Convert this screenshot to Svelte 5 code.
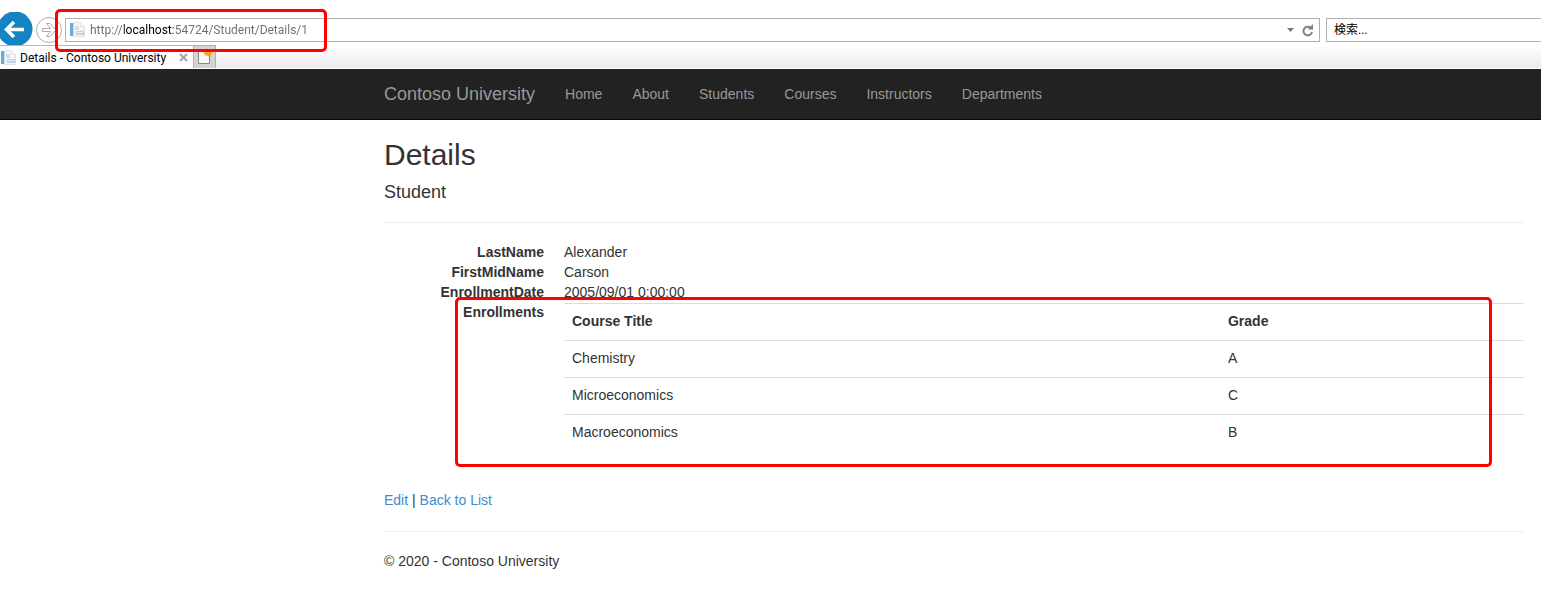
<script>
  const nav = ['Home', 'About', 'Students', 'Courses', 'Instructors', 'Departments'];
  const fields = [
    ['LastName', 'Alexander'],
    ['FirstMidName', 'Carson'],
    ['EnrollmentDate', '2005/09/01 0:00:00']
  ];
  const enrollments = [
    ['Chemistry', 'A'],
    ['Microeconomics', 'C'],
    ['Macroeconomics', 'B']
  ];
</script>

{#snippet pageIcon()}
  <svg class="page-icon" viewBox="0 0 16 16" aria-hidden="true">
    <path d="M4.5.5h7l4 4v10h-11z" fill="#f3f5f7" stroke="#e0e3e6" />
    <path d="M11.5.5v4h4" fill="#fff" stroke="#dce0e4" />
    <path d="M1 1h3v13H1z" fill="#6cabd9" />
    <path d="M4 1h1v13H4z" fill="#c4dcec" />
    <path d="M6 4h4v4H6z" fill="#d4dfe9" />
    <path d="M7 9h8v4H7z" fill="#c3d1df" />
    <path d="M8 10h6v1H8z" fill="#eef2f6" />
  </svg>
{/snippet}

<header class="chrome">
  <div class="toolbar">
    <button class="icon-button back" aria-label="Back">
      <svg width="33" height="34" viewBox="0 0 33 34">
        <circle cx="15" cy="17" r="17.5" fill="#1585c1" />
        <path d="M14 10 6.500 17.500 14 25M7 17.500h17" fill="none" stroke="#fff" stroke-width="3.500" />
      </svg>
    </button>
    <button class="icon-button forward" aria-label="Forward">
      <svg width="26" height="26" viewBox="0 0 26 26">
        <circle cx="13" cy="13" r="12.5" fill="#fff" stroke="#b0b0b0" />
        <path d="M6.500 11.500h8l-4-5h3.500l6 6.500-6 6.500h-3.500l4-5h-8z" fill="#fff" stroke="#ababab" />
      </svg>
    </button>
    <div class="address">
      {@render pageIcon()}
      <input class="url" aria-label="Address" value="http://localhost:54724/Student/Details/1" spellcheck="false" />
      <button class="icon-button" aria-label="Show address history">
        <svg width="7" height="4" viewBox="0 0 7 4"><path d="M0 0h7L3.500 4z" fill="#777" /></svg>
      </button>
      <button class="icon-button" aria-label="Refresh">
        <svg width="12" height="13" viewBox="0 0 12 13">
          <path d="M8.500 3.700A4.300 4.300 0 1 0 10 8" fill="none" stroke="#808080" stroke-width="2" />
          <path d="M5.500 5.500H11V0z" fill="#808080" />
        </svg>
      </button>
      <span class="marker address-marker"></span>
    </div>
    <input class="search" aria-label="検索" placeholder="検索..." />
  </div>
  <div class="tabs">
    <div class="tab">
      {@render pageIcon()}
      <span>Details - Contoso University</span>
      <button class="icon-button close" aria-label="Close tab">
        <svg width="9" height="9" viewBox="0 0 9 9"><path d="m1 1 7 7m0-7L1 8" stroke="#a3a3a3" stroke-width="2" /></svg>
      </button>
    </div>
    <button class="new-tab" aria-label="New tab">
      <svg width="21" height="22" viewBox="0 0 21 22">
        <path d="M4.500 4.500h11v13h-11z" fill="#f7f7f7" stroke="#888" />
        <path d="m14 3 1 2 3-1-1 2 2 1-2 1 0 2-2-1-1 2-1-2-2 1 0-2-2-1 2-1-1-2 3 1z" fill="#f9a11b" />
      </svg>
    </button>
  </div>
</header>

<nav class="navbar">
  <div class="container">
    <a class="brand" href="#home">Contoso University</a>
    {#each nav as item}
      <a href="#{item.toLowerCase()}">{item}</a>
    {/each}
  </div>
</nav>

<main class="container">
  <h2>Details</h2>
  <h4>Student</h4>
  <hr />
  <div class="details">
    <dl>
      {#each fields as [name, value]}
        <dt>{name}</dt>
        <dd>{value}</dd>
      {/each}
      <dt>Enrollments</dt>
      <dd>
        <table>
          <thead>
            <tr><th class="course">Course Title</th><th>Grade</th></tr>
          </thead>
          <tbody>
            {#each enrollments as [course, grade]}
              <tr><td>{course}</td><td>{grade}</td></tr>
            {/each}
          </tbody>
        </table>
      </dd>
    </dl>
    <span class="marker enrollment-marker"></span>
  </div>
  <p><a href="#edit">Edit</a> | <a href="#list">Back to List</a></p>
  <hr />
  <footer><p>© 2020 - Contoso University</p></footer>
</main>

<style>
  :global(body) {
    margin: 0;
    overflow-x: hidden;
    background: #fff;
    color: #333;
    font: 14px/20px 'Liberation Sans', Arial, sans-serif;
  }
  .chrome {
    font: 12px/16px Roboto, 'Noto Sans CJK JP', sans-serif;
    color: #000;
  }
  .toolbar {
    display: flex;
    height: 45px;
    box-sizing: border-box;
    padding-top: 12px;
  }
  .icon-button {
    display: flex;
    flex: none;
    align-items: center;
    padding: 0;
    border: 0;
    background: none;
  }
  .icon-button svg,
  .page-icon {
    display: block;
    flex: none;
  }
  .page-icon {
    width: 16px;
    height: 16px;
  }
  .back {
    align-items: flex-start;
  }
  .forward {
    align-items: flex-start;
    margin: 5px 3px 0;
  }
  .address {
    position: relative;
    display: flex;
    flex: 1;
    align-items: center;
    gap: 8px;
    box-sizing: border-box;
    height: 24px;
    margin-top: 6px;
    padding: 0 5px 0 3px;
    border: 1px solid #b0b0b0;
    background: #fff;
  }
  input {
    box-sizing: border-box;
    min-width: 0;
    border: 0;
    outline: 0;
    font: inherit;
  }
  .url {
    flex: 1;
    height: 20px;
    padding: 0;
    margin-left: -3px;
    background: linear-gradient(90deg, #6d6d6d 34px, #000 34px 83px, #6d6d6d 83px);
    background-clip: text;
    color: transparent;
  }
  .search {
    flex: none;
    width: 215px;
    height: 24px;
    margin: 6px 0 0 6px;
    padding: 0 7px;
    border: 1px solid #b0b0b0;
    border-right: 0;
  }
  .search::placeholder {
    color: #000;
  }
  .tabs {
    display: flex;
    height: 24px;
    box-sizing: border-box;
    border-bottom: 1px solid #fff;
    background: linear-gradient(#fff, #ebebeb);
  }
  .tab {
    display: flex;
    align-items: center;
    gap: 4px;
    width: 193px;
    box-sizing: border-box;
    padding-top: 1px;
    border-top: 1px solid #b8b8b8;
    background: #fff;
    white-space: nowrap;
  }
  .close {
    margin: 0 5px 0 auto;
  }
  .new-tab {
    width: 23px;
    padding: 0;
    border: 1px solid #b0b0b0;
    border-bottom: 0;
    background: #d4d4d4;
  }
  .new-tab svg {
    display: block;
  }
  .container {
    box-sizing: border-box;
    max-width: 1170px;
    margin-left: 369px;
    padding: 0 15px;
  }
  .navbar {
    border-bottom: 1px solid #080808;
    background: #222;
  }
  .navbar .container {
    display: flex;
    gap: 30px;
    padding-top: 15px;
    padding-bottom: 15px;
  }
  .navbar a {
    color: #999;
  }
  .navbar .brand {
    font-size: 18px;
  }
  a {
    color: #428bca;
    text-decoration: none;
  }
  h2,
  h4 {
    margin: 0 0 12px;
    font-weight: 500;
  }
  h2 {
    padding-top: 18px;
    font-size: 30px;
    line-height: 33px;
  }
  h4 {
    font-size: 18px;
    line-height: 18px;
  }
  hr {
    margin: 21px 0 19px;
    border: 0;
    border-top: 1px solid #eee;
  }
  .details {
    position: relative;
    margin-bottom: 19px;
  }
  dl {
    display: grid;
    grid-template-columns: 160px 1fr;
    column-gap: 20px;
    margin: 0;
  }
  dt {
    font-weight: 700;
    text-align: right;
  }
  dd {
    margin: 0;
  }
  table {
    width: 100%;
    margin: 1px 0 20px;
    border-spacing: 0;
  }
  th,
  td {
    padding: 7px 8px 9px;
    border-top: 1px solid #ddd;
    text-align: left;
  }
  .course {
    width: 68.33%;
  }
  p {
    margin: 0;
  }
  .marker {
    position: absolute;
    box-sizing: border-box;
    border: 3px solid #f00;
    border-radius: 5px;
    pointer-events: none;
  }
  .address-marker {
    top: -10px;
    left: -11px;
    width: 272px;
    height: 43px;
  }
  .enrollment-marker {
    top: 55px;
    right: 32px;
    bottom: 4px;
    left: 71px;
  }
</style>
